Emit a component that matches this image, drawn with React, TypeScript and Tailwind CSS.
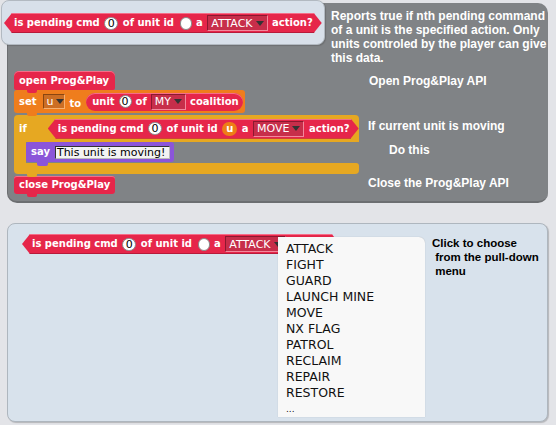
import React from "react";

function Tri() {
  return <span className="inline-block h-0 w-0 border-x-[4px] border-t-[5px] border-x-transparent border-t-[#333]" />;
}

function Drop({ label, tone }: { label: string; tone: "red" | "orange" }) {
  const cls =
    tone === "red"
      ? "border-t-[#8c1830] border-l-[#8c1830] border-b-[#f2889c] border-r-[#f2889c] bg-[#c72e4a]"
      : "border-t-[#8a4510] border-l-[#8a4510] border-b-[#f6b070] border-r-[#f6b070] bg-[#cc6e24]";
  return (
    <span className={`flex h-[16px] items-center gap-[3px] border pl-[3px] pr-[3px] text-[11px] font-normal text-white ${cls}`}>
      <span className="leading-none">{label}</span>
      <Tri />
    </span>
  );
}

function Num({ v, w }: { v?: string; w: string }) {
  return (
    <span className={`flex h-[13px] items-center justify-center rounded-full border border-[#8a8a8a] bg-white text-[11px] font-normal leading-none text-black ${w}`}>
      {v}
    </span>
  );
}

function T({ children }: { children: React.ReactNode }) {
  return <span className="whitespace-pre text-[10px] font-bold leading-none text-white">{children}</span>;
}

function Hex({ children }: { children: React.ReactNode }) {
  return (
    <div className="flex h-[20px] w-max items-center gap-[4.5px] bg-[#e6264a] pl-[10px] pr-[9px] shadow-[inset_0_1px_0_#f56d88,inset_0_-1px_0_#b81a3a] [clip-path:polygon(8px_0,calc(100%_-_8px)_0,100%_50%,calc(100%_-_8px)_100%,8px_100%,0_50%)]">
      {children}
    </div>
  );
}

function PendingHex({ id, action }: { id: "empty" | "u"; action: string }) {
  return (
    <Hex>
      <T>is pending cmd</T>
      <Num v="0" w="w-[14px]" />
      <T>of unit id</T>
      {id === "empty" ? (
        <span className="ml-[1px]">
          <Num w="w-[12px]" />
        </span>
      ) : (
        <span className="flex h-[14px] w-[15px] items-center justify-center rounded-full bg-[#ee7d16] text-[10px] font-bold leading-none text-white">
          u
        </span>
      )}
      <T>a</T>
      <Drop label={action} tone="red" />
      <T>action?</T>
    </Hex>
  );
}

function Tab({ color }: { color: string }) {
  return <span className={`absolute left-[13px] top-full h-[3px] w-[10px] rounded-b-[2px] ${color}`} />;
}

export default function App() {
  return (
    <div className="relative h-[425px] w-[556px] overflow-hidden bg-[#e3e4e8] pt-[3px] font-['DejaVu_Sans',sans-serif]">
      {/* Top scripting area */}
      <div className="ml-[7px] flex h-[200px] w-[541px] flex-col rounded-[10px] border-b-2 border-l border-[#6c6e71] bg-[#808386]">
        <p className="pl-[323px] pt-[6px] font-['Liberation_Sans',Arial,sans-serif] text-[12px] font-bold leading-[14px] text-white">
          Reports true if nth pending command
          <br />
          of a unit is the specified action. Only
          <br />
          units controled by the player can give
          <br />
          this data.
        </p>
        <div className="mt-[6px] flex">
          {/* scripts */}
          <div className="flex w-[360px] flex-col items-start pl-[6px]">
            <div className="relative z-[3] flex h-[19px] w-[101px] items-center rounded-t-[5px] rounded-b-[2px] bg-[#e6264a] pl-[5px] shadow-[inset_0_1px_0_#f56d88]">
              <T>open Prog&amp;Play</T>
              <Tab color="bg-[#e6264a]" />
            </div>
            <div className="relative z-[2] flex h-[23px] w-[231px] items-center rounded-[3px] bg-[#ef7d1d] pl-[5px] pr-[5px]">
              <T>set</T>
              <span className="ml-[6px] flex h-[15px] w-[22px] items-center gap-[2px] border border-t-[#8a4510] border-l-[#8a4510] border-b-[#f6b070] border-r-[#f6b070] bg-[#cc6e24] pl-[3px] text-[11px] leading-none text-white">
                u
                <Tri />
              </span>
              <span className="ml-[5px]">
                <T>to</T>
              </span>
              <span className="ml-[5px] flex h-[18px] items-center gap-[4px] rounded-full bg-[#e6264a] pl-[6px] pr-[4px] shadow-[inset_0_1px_0_#f56d88]">
                <T>unit</T>
                <Num v="0" w="w-[13px]" />
                <T>of</T>
                <Drop label="MY" tone="red" />
                <T>coalition</T>
              </span>
              <Tab color="bg-[#ef7d1d]" />
            </div>
            <div className="relative z-[1] mt-[2px] flex w-[345px] flex-col">
              <div className="flex h-[27px] items-center rounded-t-[4px] bg-[#e6a822] pl-[5px]">
                <T>if</T>
                <div className="ml-[21px]">
                  <PendingHex id="u" action="MOVE" />
                </div>
              </div>
              <div className="flex">
                <div className="h-[21px] w-[12px] bg-[#e6a822]" />
                <div className="relative z-[2] flex h-[20px] w-[148px] items-center rounded-[3px] bg-[#8b55d9] pl-[5px]">
                  <T>say</T>
                  <span className="ml-[5px] flex h-[13px] w-[115px] items-center border border-t-[#333] border-l-[#333] border-b-[#bbb] border-r-[#bbb] bg-[#f3f3f3] px-[1px] text-[11px] leading-none text-black">
                    This unit is moving!
                  </span>
                  <span className="absolute left-[11px] top-full h-[4px] w-[11px] rounded-b-[2px] bg-[#8b55d9]" />
                </div>
              </div>
              <div className="relative h-[11px] rounded-b-[4px] rounded-tr-[3px] bg-[#e6a822]">
                <Tab color="bg-[#e6a822]" />
              </div>
            </div>
            <div className="relative mt-[2px] flex h-[18px] w-[101px] items-center rounded-[3px] bg-[#e6264a] pl-[5px] shadow-[inset_0_1px_0_#f56d88]">
              <T>close Prog&amp;Play</T>
              <Tab color="bg-[#e6264a]" />
            </div>
          </div>
          {/* comments */}
          <div className="flex flex-col font-['Liberation_Sans',Arial,sans-serif] text-[12px] font-bold leading-[14px] text-white">
            <span className="mt-[3px] pl-[1px]">Open Prog&amp;Play API</span>
            <span className="mt-[31px]">If current unit is moving</span>
            <span className="mt-[10px] pl-[21px]">Do this</span>
            <span className="mt-[19px]">Close the Prog&amp;Play API</span>
          </div>
        </div>
      </div>

      {/* floating block preview */}
      <div className="absolute left-[1px] top-0 h-[45px] w-[324px] rounded-[8px] border border-[#b2b9c1] bg-[#d8e0ea] pl-[2px] pt-[12px] shadow-[1px_1px_1px_rgba(0,0,0,0.15)]">
        <PendingHex id="empty" action="ATTACK" />
      </div>

      {/* Bottom panel */}
      <div className="relative ml-[7px] mt-[20px] grid h-[199px] w-[541px] grid-cols-[424px_1fr] rounded-[8px] border border-[#aeb6be] bg-[#d8e2ec] shadow-[1px_1px_1px_rgba(0,0,0,0.2)]">
        <div className="pl-[14px] pt-[10px]">
          <PendingHex id="empty" action="ATTACK" />
        </div>
        <p className="whitespace-pre pt-[12px] font-['Liberation_Sans',Arial,sans-serif] text-[11.5px] font-bold leading-[14px] text-black">
          {"Click to choose\n from the pull-down\n menu"}
        </p>
        <ul className="absolute left-[270px] top-[13px] h-[180px] w-[147px] rounded-tr-[6px] bg-[#f8f8f8] pl-[8px] pt-[4px] text-[12.5px] leading-[16px] text-[#111] shadow-[0_0_1px_rgba(0,0,0,0.25)]">
          {["ATTACK", "FIGHT", "GUARD", "LAUNCH MINE", "MOVE", "NX FLAG", "PATROL", "RECLAIM", "REPAIR", "RESTORE", "..."].map((it) => (
            <li key={it} className={it === "..." ? "text-[9px]" : ""}>
              {it}
            </li>
          ))}
        </ul>
      </div>
    </div>
  );
}
